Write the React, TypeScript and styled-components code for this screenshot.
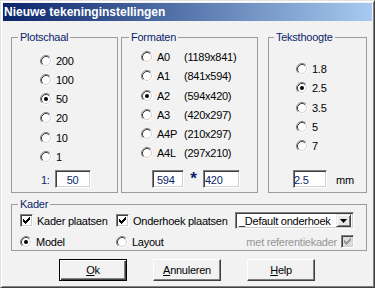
import React from 'react';
import styled, { createGlobalStyle, css } from 'styled-components';

const NAVY = '#0b1f6b';
const FACE = '#f2f2f2';

const GlobalStyle = createGlobalStyle`
  * { box-sizing: border-box; }
  html, body { margin: 0; padding: 0; background: ${FACE}; }
`;

const Window = styled.div`
  width: 375px;
  height: 288px;
  display: flex;
  flex-direction: column;
  padding: 2px;
  background: ${FACE};
  border: 1px solid;
  border-color: #e2e2e2 #404040 #404040 #e2e2e2;
  box-shadow: inset 1px 1px 0 #fff, inset -1px -1px 0 #808080;
  font-family: 'Liberation Sans', Arial, sans-serif;
  font-size: 11px;
  letter-spacing: -0.25px;
  color: #000;
`;

const TitleBar = styled.div`
  flex: none;
  height: 18px;
  display: flex;
  align-items: center;
  padding-left: 1px;
  background: linear-gradient(to right, #0a246a, #a6caf0);
  color: #fff;
  font-size: 12px;
  font-weight: bold;
  letter-spacing: 0;
`;

const Body = styled.div`
  flex: 1;
  display: flex;
  flex-direction: column;
  padding: 10px 5px 0 8px;
`;

const TopRow = styled.div`
  height: 162px;
  display: flex;
  gap: 3px;
`;

const Group = styled.fieldset<{ $width?: number; $push?: boolean }>`
  margin: 0;
  padding: 0;
  min-width: 0;
  width: ${(p) => (p.$width ? `${p.$width}px` : 'auto')};
  margin-left: ${(p) => (p.$push ? 'auto' : '0')};
  display: flex;
  flex-direction: column;
  border: 1px solid #9c9c9c;
`;

const Legend = styled.legend<{ $indent: number }>`
  margin-left: ${(p) => p.$indent}px;
  padding: 0 2px;
  line-height: 13px;
  color: ${NAVY};
`;

const GroupBody = styled.div`
  flex: 1;
  display: flex;
  flex-direction: column;
`;

const RadioList = styled.div<{ $top: number; $left: number }>`
  display: flex;
  flex-direction: column;
  padding: ${(p) => p.$top}px 0 0 ${(p) => p.$left}px;
`;

const Option = styled.label`
  height: 19.25px;
  display: flex;
  align-items: center;
  gap: 4px;
  white-space: nowrap;
`;

const SizeName = styled.span`
  width: 23px;
`;

const InputRow = styled.div<{ $left: number }>`
  margin-top: auto;
  margin-bottom: 4px;
  display: flex;
  align-items: baseline;
  padding-left: ${(p) => p.$left}px;
`;

const FieldLabel = styled.span<{ $width?: number; $navy?: boolean; $ml?: number }>`
  width: ${(p) => (p.$width ? `${p.$width}px` : 'auto')};
  margin-left: ${(p) => p.$ml ?? 0}px;
  color: ${(p) => (p.$navy ? NAVY : '#000')};
`;

const sunken = css`
  border: 1px solid;
  border-color: #808080 #fff #fff #808080;
  box-shadow: inset 1px 1px 0 #404040, inset -1px -1px 0 #d4d0c8;
`;

const EditBox = styled.div<{ $width: number; $center?: boolean; $pad?: number }>`
  ${sunken};
  width: ${(p) => p.$width}px;
  height: 18px;
  display: flex;
  align-items: center;
  justify-content: ${(p) => (p.$center ? 'center' : 'flex-start')};
  padding: 2px 1px 0 ${(p) => p.$pad ?? 0}px;
  background: #fff;
  color: ${NAVY};
`;

const Star = styled.span`
  width: 19px;
  text-align: center;
  font-size: 17px;
  font-weight: bold;
  line-height: 10px;
  color: ${NAVY};
`;

const KaderGroup = styled(Group)`
  height: 53px;
  margin-top: 5px;
`;

const KaderGrid = styled.div`
  display: grid;
  grid-template-columns: 96px 119px 119px;
  grid-template-rows: 17px 13px;
  row-gap: 6px;
  align-items: center;
  padding: 1px 0 0 8px;
`;

const Check = styled.label`
  display: flex;
  align-items: center;
  gap: 4px;
  white-space: nowrap;
`;

const CheckBox = styled.span<{ $disabled?: boolean }>`
  ${sunken};
  flex: none;
  width: 13px;
  height: 13px;
  display: flex;
  align-items: center;
  justify-content: center;
  background: ${(p) => (p.$disabled ? '#dcdcdc' : '#fff')};
`;

const Combo = styled.div`
  ${sunken};
  width: 119px;
  height: 17px;
  display: flex;
  align-items: center;
  padding: 2px;
  background: #fff;
`;

const ComboText = styled.span`
  flex: 1;
  padding-left: 1px;
  overflow: hidden;
  white-space: nowrap;
`;

const DropButton = styled.span`
  flex: none;
  width: 15px;
  height: 13px;
  display: flex;
  align-items: center;
  justify-content: center;
  background: #e8e8e8;
  border: 1px solid;
  border-color: #e8e8e8 #404040 #404040 #e8e8e8;
  box-shadow: inset 1px 1px 0 #fff, inset -1px -1px 0 #808080;
`;

const RefCell = styled.div`
  display: flex;
  align-items: center;
  justify-content: flex-end;
  gap: 4px;
  color: #969696;
`;

const ButtonRow = styled.div`
  margin-top: 8px;
  display: flex;
  gap: 26px;
  padding-left: 48px;
`;

const Button = styled.button<{ $default?: boolean }>`
  width: 68px;
  height: 22px;
  margin: 0;
  padding: 0;
  font: inherit;
  letter-spacing: inherit;
  color: #000;
  background: ${FACE};
  border: 1px solid;
  border-color: #fff #404040 #404040 #fff;
  box-shadow: inset -1px -1px 0 #808080;
  ${(p) =>
    p.$default &&
    css`
      border-color: #000;
      box-shadow: inset 1px 1px 0 #fff, inset -1px -1px 0 #404040, inset -2px -2px 0 #808080;
    `}
`;

const Mnemonic = styled.u`
  text-underline-offset: 1px;
`;

const RadioIcon = ({ checked }: { checked?: boolean }) => (
  <svg width="12" height="12" viewBox="0 0 12 12" style={{ flex: 'none' }}>
    <circle cx="6" cy="6" r="5" fill="#fff" />
    <path d="M2.11 9.89A5.5 5.5 0 0 1 9.89 2.11" stroke="#808080" fill="none" />
    <path d="M9.89 2.11A5.5 5.5 0 0 1 2.11 9.89" stroke="#fff" fill="none" />
    <path d="M2.82 9.18A4.5 4.5 0 0 1 9.18 2.82" stroke="#404040" fill="none" />
    <path d="M9.18 2.82A4.5 4.5 0 0 1 2.82 9.18" stroke="#d4d0c8" fill="none" />
    {checked && <circle cx="6" cy="6" r="2" fill="#000" />}
  </svg>
);

// classic 7x7 check mark bitmap
const CHECK = ['......X', '.....XX', 'X...XXX', 'XX.XXX.', 'XXXXX..', '.XXX...', '..X....'];

const CheckIcon = ({ color }: { color: string }) => (
  <svg width="7" height="7" viewBox="0 0 7 7" shapeRendering="crispEdges">
    {CHECK.map((row, y) =>
      row.split('').map((c, x) => (c === 'X' ? <rect key={`${x}-${y}`} x={x} y={y} width="1" height="1" fill={color} /> : null))
    )}
  </svg>
);

const plotschaal = ['200', '100', '50', '20', '10', '1'];
const formaten = [
  ['A0', '(1189x841)'],
  ['A1', '(841x594)'],
  ['A2', '(594x420)'],
  ['A3', '(420x297)'],
  ['A4P', '(210x297)'],
  ['A4L', '(297x210)'],
];
const teksthoogte = ['1.8', '2.5', '3.5', '5', '7'];

const App: React.FC = () => {
  return (
    <>
      <GlobalStyle />
      <Window>
        <TitleBar>Nieuwe tekeninginstellingen</TitleBar>
        <Body>
          <TopRow>
            <Group $width={107}>
              <Legend $indent={6}>Plotschaal</Legend>
              <GroupBody>
                <RadioList $top={7} $left={28}>
                  {plotschaal.map((v) => (
                    <Option key={v}>
                      <RadioIcon checked={v === '50'} />
                      {v}
                    </Option>
                  ))}
                </RadioList>
                <InputRow $left={29}>
                  <FieldLabel $width={14} $navy>
                    1:
                  </FieldLabel>
                  <EditBox $width={36} $center>
                    50
                  </EditBox>
                </InputRow>
              </GroupBody>
            </Group>

            <Group $width={137}>
              <Legend $indent={7}>Formaten</Legend>
              <GroupBody>
                <RadioList $top={3.5} $left={19}>
                  {formaten.map(([name, dims]) => (
                    <Option key={name}>
                      <RadioIcon checked={name === 'A2'} />
                      <SizeName>{name}</SizeName>
                      {dims}
                    </Option>
                  ))}
                </RadioList>
                <InputRow $left={30}>
                  <EditBox $width={32} $pad={4}>
                    594
                  </EditBox>
                  <Star>*</Star>
                  <EditBox $width={37} $pad={1}>
                    420
                  </EditBox>
                </InputRow>
              </GroupBody>
            </Group>

            <Group $width={99} $push>
              <Legend $indent={5}>Teksthoogte</Legend>
              <GroupBody>
                <RadioList $top={15.5} $left={27}>
                  {teksthoogte.map((v) => (
                    <Option key={v}>
                      <RadioIcon checked={v === '2.5'} />
                      {v}
                    </Option>
                  ))}
                </RadioList>
                <InputRow $left={24}>
                  <EditBox $width={34}>2.5</EditBox>
                  <FieldLabel $ml={9}>mm</FieldLabel>
                </InputRow>
              </GroupBody>
            </Group>
          </TopRow>

          <KaderGroup>
            <Legend $indent={6}>Kader</Legend>
            <KaderGrid>
              <Check>
                <CheckBox>
                  <CheckIcon color="#000" />
                </CheckBox>
                Kader plaatsen
              </Check>
              <Check>
                <CheckBox>
                  <CheckIcon color="#000" />
                </CheckBox>
                Onderhoek plaatsen
              </Check>
              <Combo>
                <ComboText>_Default onderhoek</ComboText>
                <DropButton>
                  <svg width="7" height="4" viewBox="0 0 7 4">
                    <polygon points="0,0 7,0 3.5,4" fill="#000" />
                  </svg>
                </DropButton>
              </Combo>
              <Option>
                <RadioIcon checked />
                Model
              </Option>
              <Option>
                <RadioIcon />
                Layout
              </Option>
              <RefCell>
                met referentiekader
                <CheckBox $disabled>
                  <CheckIcon color="#9a9a9a" />
                </CheckBox>
              </RefCell>
            </KaderGrid>
          </KaderGroup>

          <ButtonRow>
            <Button $default>
              <Mnemonic>O</Mnemonic>k
            </Button>
            <Button>
              <Mnemonic>A</Mnemonic>nnuleren
            </Button>
            <Button>
              <Mnemonic>H</Mnemonic>elp
            </Button>
          </ButtonRow>
        </Body>
      </Window>
    </>
  );
};

export default App;
